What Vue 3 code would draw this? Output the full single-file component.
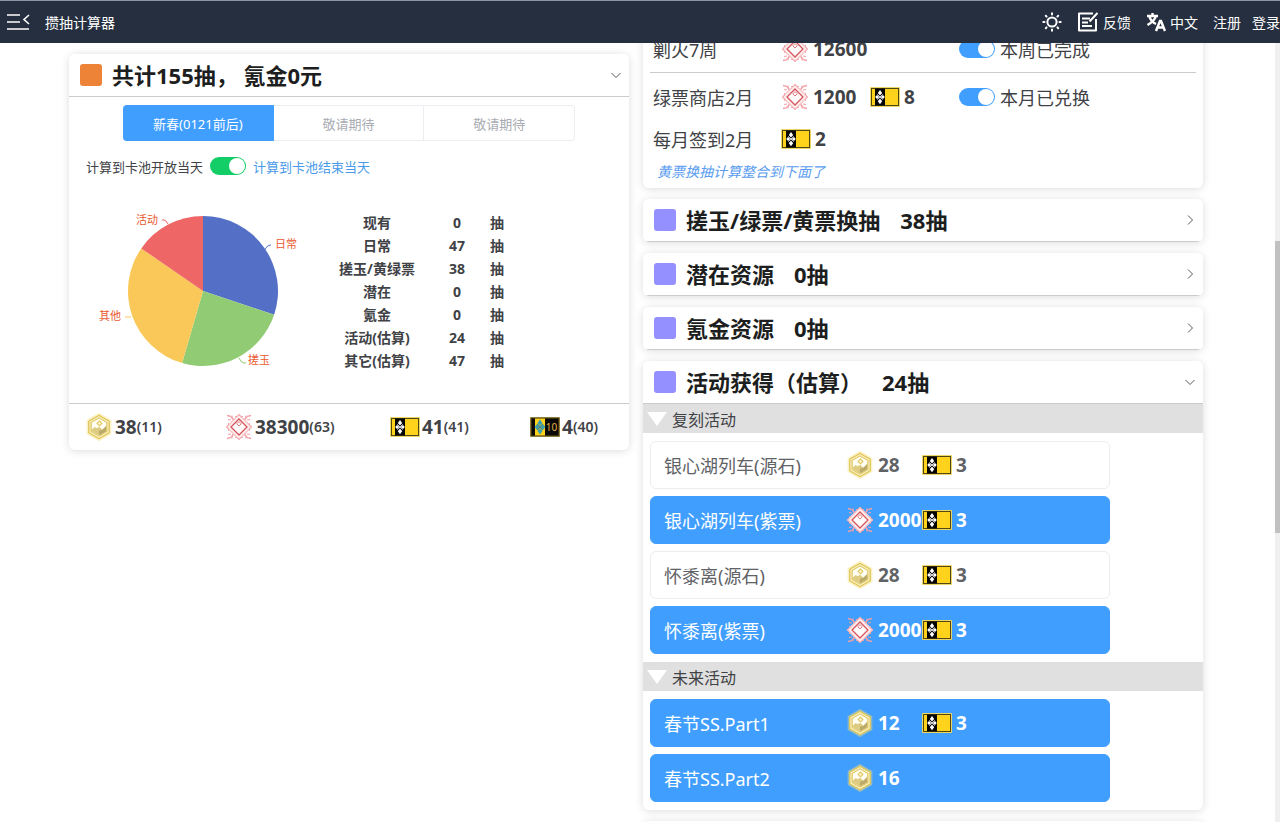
<script setup>
import { ref } from 'vue'

const pools = ['新春(0121前后)', '敬请期待', '敬请期待']
const untilEnd = ref(true)
const weekDone = ref(true)
const monthDone = ref(true)

const summary = [
  ['现有', 0],
  ['日常', 47],
  ['搓玉/黄绿票', 38],
  ['潜在', 0],
  ['氪金', 0],
  ['活动(估算)', 24],
  ['其它(估算)', 47]
]

const totals = [
  { icon: 'stone', value: 38, sub: 11 },
  { icon: 'jade', value: 38300, sub: 63 },
  { icon: 'ticket', value: 41, sub: 41 },
  { icon: 'ticket10', value: 4, sub: 40 }
]

const collapsed = [
  { name: '搓玉/绿票/黄票换抽', count: '38抽' },
  { name: '潜在资源', count: '0抽' },
  { name: '氪金资源', count: '0抽' }
]

const groups = ref([
  {
    name: '复刻活动',
    options: [
      { name: '银心湖列车(源石)', on: false, items: [['stone', 28], ['ticket', 3]] },
      { name: '银心湖列车(紫票)', on: true, items: [['jade', 2000], ['ticket', 3]] },
      { name: '怀黍离(源石)', on: false, items: [['stone', 28], ['ticket', 3]] },
      { name: '怀黍离(紫票)', on: true, items: [['jade', 2000], ['ticket', 3]] }
    ]
  },
  {
    name: '未来活动',
    options: [
      { name: '春节SS.Part1', on: true, items: [['stone', 12], ['ticket', 3]] },
      { name: '春节SS.Part2', on: true, items: [['stone', 16]] }
    ]
  }
])

const pie = [
  { name: '日常', value: 47, color: '#5470c6', x: 188, y: 47, line: 'M177 50q3-6 6-6h1' },
  { name: '搓玉', value: 38, color: '#91cc75', x: 161, y: 163, line: 'M152 157q2 5 5 5h2' },
  { name: '其他', value: 47, color: '#fac858', x: 12, y: 119, line: 'M44 116l-3 0h-3' },
  { name: '活动', value: 24, color: '#ee6666', x: 49, y: 23, line: 'M81 23q-2-4-4-4h-2' }
]
const cx = 116
const cy = 90
const radius = 75
const sum = pie.reduce((a, s) => a + s.value, 0)
let acc = 0
const slices = pie.map((s) => {
  const a = (acc / sum) * Math.PI * 2
  acc += s.value
  const b = (acc / sum) * Math.PI * 2
  const p = (t) => `${(cx + radius * Math.sin(t)).toFixed(2)} ${(cy - radius * Math.cos(t)).toFixed(2)}`
  return { ...s, d: `M${cx} ${cy}L${p(a)}A${radius} ${radius} 0 0 1 ${p(b)}Z` }
})
</script>

<template>
  <div class="page">
    <svg class="defs" aria-hidden="true">
      <symbol id="stone" viewBox="0 0 28 28">
        <path d="M14 1.6l10.8 6.2v12.4L14 26.4 3.2 20.2V7.8z" fill="#f7e07e" stroke="#f5dc70" stroke-opacity=".4" stroke-width="3.2" stroke-linejoin="round" />
        <path d="M14 2.4l10.2 5.800v11.600L14 25.600 3.800 19.800V8.200z" fill="#dfc661" stroke="#d8bd52" stroke-width=".8" />
        <path d="M14 3.800l9 5.100v10.200l-9 5.100-9-5.100V8.900z" fill="none" stroke="#f8efbd" stroke-width="1.200" />
        <path d="M14 5.6l7.2 4.2v8.4L14 22.400l-7.200-4.200V9.800z" fill="#fffef4" />
        <path d="M6.800 16.500l3-2.600 1.800 1.400 2.600-1.600 3.200 3 3.800-3.700v5.200L14 22.400l-7.200-4.200z" fill="#dccb80" />
        <path d="M14 22.400v-4.600l3.400-1.100 3.800-3.700v5.200z" fill="#bcab68" />
        <path d="M14.500 8l2.400 2.4-2.400 2.400-2.400-2.4z" fill="#fff7d0" stroke="#dfc55d" stroke-width="1.1" />
      </symbol>
      <symbol id="jade" viewBox="0 0 28 28">
        <g fill="none" stroke="#f1a0a5">
          <path d="M14 1.500L26.500 14 14 26.500 1.500 14z" stroke="#f7c3c5" stroke-width="1.200" fill="#fdebeb" />
          <path d="M2 2.500l3.500.8 3 3.200M26 2.500l-3.500.8-3 3.200M2 25.500l3.500-.8 3-3.200M26 25.500l-3.500-.8-3-3.200" stroke-width="1.300" />
          <path d="M3 6.500l3 .5M7 2.500l.5 4M25 6.500l-3 .5M21 2.500l-.5 4M3 21.500l3-.5M7 25.500l.5-4M25 21.500l-3-.5M21 25.500l-.5-4" stroke-width="1" />
          <path d="M10 3.500h2l2-2 2 2h2M10 24.500h2l2 2 2-2h2M3.500 10v2l-2 2 2 2v2M24.500 10v2l2 2-2 2v2" stroke-width=".9" />
        </g>
        <path d="M14 4.200L23.800 14 14 23.800 4.200 14z" fill="#fff3f3" />
        <path d="M14 6l8 8-8 8-8-8z" fill="#fffafa" stroke="#d4545b" stroke-width="1.300" />
        <path d="M14 8.600l2.200 2.200L14 13l-2.200-2.200z" fill="#fff" stroke="#de777b" stroke-width="1" />
      </symbol>
      <symbol id="ticket" viewBox="0 0 30 20">
        <rect x="0" y="0" width="30" height="20" rx="1" fill="#ead565" />
        <rect x="1.5" y="1.5" width="27" height="17" fill="#ffd21c" stroke="#514715" stroke-width="1" />
        <rect x="5" y="1.5" width="10" height="17" fill="#050505" />
        <path d="M10 3l2.200 3L10 8.400 7.800 6zM10 11.600l2.200 2.600-2.200 3-2.200-3zM5.200 10L7 8l2.200 2L7 12zM14.800 10L13 8l-2.200 2 2.200 2z" fill="#fff" />
        <path d="M7.200 7.400l5.600 5.200M12.800 7.400l-5.600 5.200" stroke="#d7d9dc" stroke-width="1" />
      </symbol>
    </svg>

    <header class="bar">
      <button class="plain menu" aria-label="菜单">
        <svg width="24" height="18" viewBox="0 0 24 18" fill="none" stroke="#fff" stroke-width="1.6">
          <path d="M1 2h13M1 9h13M1 16h22M23 2l-5 4.500 5 4.500" />
        </svg>
      </button>
      <h1>攒抽计算器</h1>
      <nav>
        <button class="plain sun" aria-label="切换主题">
          <svg width="20" height="20" viewBox="0 0 20 20" fill="none" stroke="#fff" stroke-width="2" stroke-linecap="round">
            <circle cx="10" cy="10" r="4.600" />
            <path d="M10 1.300v1.200M10 17.500v1.200M1.300 10h1.200M17.500 10h1.200M3.800 3.800l.8.8M15.400 15.400l.8.8M3.800 16.200l.8-.8M15.400 4.600l.8-.8" />
          </svg>
        </button>
        <a href="#" class="feedback">
          <svg width="22" height="20" viewBox="0 0 22 20" fill="none" stroke="#fff" stroke-width="2">
            <path d="M16 1.500H2v17h17V7M5 6.500h8M5 10.500h6M5 14h10M12.500 9.500L20.500 1" stroke-linejoin="round" />
          </svg>
          反馈
        </a>
        <a href="#" class="lang">
          <svg width="20" height="20" viewBox="0 0 20 20" fill="none" stroke="#fff">
            <path d="M1 4h11M6.500 1v3M10 4q-1.500 5-8.500 9M3.500 5q2 5 6.500 7" stroke-width="2.400" />
            <path d="M10 19l4-10h1l4 10M11.500 15.500h6" stroke-width="2.500" />
          </svg>
          中文
        </a>
        <a href="#" class="reg">注册</a>
        <a href="#">登录</a>
      </nav>
    </header>

    <main>
      <div class="columns">
        <div class="col">
          <section class="card">
            <button class="head line">
              <i class="mark orange"></i>
              <span>共计155抽，&nbsp;氪金0元</span>
              <svg class="arrow" width="10" height="10" viewBox="0 0 10 10"><path d="M.5 3L5 7.500 9.500 3" /></svg>
            </button>
            <div class="segments">
              <button v-for="(p, i) in pools" :key="i" :class="{ active: i === 0 }" :disabled="i > 0">{{ p }}</button>
            </div>
            <div class="range">
              <label for="until">计算到卡池开放当天</label>
              <input id="until" v-model="untilEnd" type="checkbox" class="switch green" />
              <label for="until" class="blue">计算到卡池结束当天</label>
            </div>
            <div class="chart">
              <svg width="220" height="180" viewBox="0 0 220 180" role="img" aria-label="抽数分布">
                <g v-for="s in slices" :key="s.name">
                  <path :d="s.d" :fill="s.color" />
                  <path :d="s.line" fill="none" :stroke="s.color" />
                  <text :x="s.x" :y="s.y" font-size="11" fill="#ea5a30">{{ s.name }}</text>
                </g>
              </svg>
              <table>
                <tbody>
                  <tr v-for="r in summary" :key="r[0]">
                    <th scope="row">{{ r[0] }}</th>
                    <td>{{ r[1] }}</td>
                    <td>抽</td>
                  </tr>
                </tbody>
              </table>
            </div>
            <div class="totals">
              <div v-for="t in totals" :key="t.icon">
                <svg v-if="t.icon === 'ticket10'" class="ticket" viewBox="0 0 30 20">
                  <rect width="30" height="20" rx="1" fill="#8b7a3a" />
                  <rect x="1.5" y="1.5" width="27" height="17" fill="#0b0906" stroke="#3a3112" />
                  <rect x="5" y="1.5" width="10" height="17" fill="#ffd21c" />
                  <path d="M10 2.500l2.500 3.600L10 8.700 7.500 6.100zM10 11.300l2.500 2.600-2.500 3.600-2.500-3.600zM4.500 10l2.400-2.400L9.300 10l-2.400 2.400zM15.500 10l-2.400-2.400-2.400 2.400 2.400 2.400z" fill="#3aa0b4" />
                  <path d="M7 6.800l6 6.400M13 6.800l-6 6.400" stroke="#3a8696" stroke-width="1.200" />
                  <text x="21.500" y="13.500" text-anchor="middle" font-size="10" fill="#e3b04a">10</text>
                </svg>
                <svg v-else :class="t.icon" aria-hidden="true"><use :href="'#' + t.icon" /></svg>
                <b>{{ t.value }}</b><small>({{ t.sub }})</small>
              </div>
            </div>
          </section>
        </div>

        <div class="col scrolled">
          <section class="card daily">
            <div class="row line">
              <span>剿火7周</span>
              <div class="items">
                <span class="item"><svg class="jade" aria-hidden="true"><use href="#jade" /></svg><b>12600</b></span>
              </div>
              <label><input v-model="weekDone" type="checkbox" class="switch" />本周已完成</label>
            </div>
            <div class="row">
              <span>绿票商店2月</span>
              <div class="items">
                <span class="item"><svg class="jade" aria-hidden="true"><use href="#jade" /></svg><b>1200</b></span>
                <span class="item"><svg class="ticket" aria-hidden="true"><use href="#ticket" /></svg><b>8</b></span>
              </div>
              <label><input v-model="monthDone" type="checkbox" class="switch" />本月已兑换</label>
            </div>
            <div class="row short">
              <span>每月签到2月</span>
              <div class="items">
                <span class="item"><svg class="ticket" aria-hidden="true"><use href="#ticket" /></svg><b>2</b></span>
              </div>
            </div>
            <p class="hint">黄票换抽计算整合到下面了</p>
          </section>

          <section v-for="c in collapsed" :key="c.name" class="card">
            <button class="head line">
              <i class="mark"></i>
              <span>{{ c.name }}</span><span class="count">{{ c.count }}</span>
              <svg class="arrow" width="10" height="10" viewBox="0 0 10 10"><path d="M3 .5L7.500 5 3 9.500" /></svg>
            </button>
          </section>

          <section class="card">
            <button class="head line">
              <i class="mark"></i>
              <span>活动获得（估算）</span><span class="count">24抽</span>
              <svg class="arrow" width="10" height="10" viewBox="0 0 10 10"><path d="M.5 3L5 7.500 9.500 3" /></svg>
            </button>
            <template v-for="g in groups" :key="g.name">
              <h2 class="sub"><i></i>{{ g.name }}</h2>
              <div class="options">
                <button v-for="o in g.options" :key="o.name" :class="{ on: o.on }" :aria-pressed="o.on" @click="o.on = !o.on">
                  <span>{{ o.name }}</span>
                  <span v-for="it in o.items" :key="it[0]" class="item">
                    <svg :class="it[0]" aria-hidden="true"><use :href="'#' + it[0]" /></svg><b>{{ it[1] }}</b>
                  </span>
                </button>
              </div>
            </template>
          </section>

          <section class="card">
            <button class="head line" aria-label="更多"></button>
          </section>
        </div>
      </div>
      <div class="track"><div class="thumb"></div></div>
    </main>
  </div>
</template>

<style>
body {
  background: #fff;
  overflow: hidden;
}
</style>

<style scoped>
.page {
  height: 100vh;
  display: flex;
  flex-direction: column;
  font-family: "Noto Sans", "Noto Sans CJK SC", sans-serif;
  color: #404246;
}
.page * {
  box-sizing: border-box;
}
.defs {
  position: absolute;
  width: 0;
  height: 0;
}
button {
  font: inherit;
  color: inherit;
  cursor: pointer;
}
.plain {
  border: 0;
  padding: 0;
  background: none;
  display: flex;
}
.bar {
  flex: none;
  height: 43px;
  display: flex;
  align-items: center;
  background: #252f3f;
  border-top: 1px solid #8a96a4;
  color: #fff;
  font-size: 14px;
  padding-left: 6px;
  z-index: 1;
}
.bar h1 {
  font-size: 14px;
  font-weight: 400;
  margin: 0 0 0 15px;
}
nav {
  margin-left: auto;
  display: flex;
  align-items: center;
  white-space: nowrap;
}
nav a {
  color: inherit;
  text-decoration: none;
  display: flex;
  align-items: center;
  gap: 4px;
}
.sun {
  margin-right: 15px;
}
.feedback,
.lang {
  margin-right: 15px;
}
.reg {
  margin-right: 11px;
}
main {
  flex: 1;
  min-height: 0;
  display: flex;
  overflow: hidden;
}
.columns {
  flex: 1;
  max-width: 1134px;
  margin: 0 auto;
  display: grid;
  grid-template-columns: 1fr 1fr;
  gap: 14px;
  align-items: start;
  padding-top: 11px;
}
.col {
  display: flex;
  flex-direction: column;
  gap: 11px;
}
.scrolled {
  margin-top: -28px;
}
.track {
  width: 5px;
  margin-left: 3px;
  background: #f0f0f0;
  display: grid;
  grid-template-rows: 198fr 292fr 289fr;
}
.thumb {
  grid-row: 2;
  background: #c1c1c1;
}
.card {
  background: #fff;
  border-radius: 6px;
  box-shadow: 0 1px 8px rgba(0, 0, 0, 0.14);
  overflow: hidden;
}
.head {
  width: 100%;
  height: 43px;
  display: flex;
  align-items: center;
  padding: 0 8px 0 11px;
  border: 0;
  background: #fff;
  color: #1d1e20;
  font-size: 22px;
  line-height: 30px;
  font-weight: 700;
  text-align: left;
}
.line {
  border-bottom: 1px solid #cbcbcb;
}
.mark {
  width: 22px;
  height: 22px;
  border-radius: 3px;
  background: #9590ff;
  margin-right: 10px;
}
.orange {
  background: #ed8336;
}
.count {
  margin-left: 20px;
}
.arrow {
  margin-left: auto;
  fill: none;
  stroke: #55585c;
}
.segments {
  display: flex;
  margin: 8px 54px 0;
  height: 36px;
  font-size: 13px;
}
.segments button {
  flex: 1;
  padding: 0;
  background: #fff;
  border: 1px solid #ebedf1;
  border-left-width: 0;
  color: #a9acb3;
}
.segments button:first-child {
  border-radius: 4px 0 0 4px;
}
.segments button:last-child {
  border-radius: 0 4px 4px 0;
}
.segments .active {
  background: #409eff;
  border-color: #409eff;
  color: #fff;
}
.range {
  display: flex;
  align-items: center;
  gap: 7px;
  height: 18px;
  margin: 16px 17px 0;
  font-size: 13px;
}
.blue {
  color: #4a9ae8;
}
.switch {
  appearance: none;
  flex: none;
  width: 36px;
  height: 18px;
  margin: 0;
  padding: 1px;
  border-radius: 9px;
  background: #c6c9cf;
  display: flex;
}
.switch::before {
  content: "";
  width: 16px;
  height: 16px;
  border-radius: 50%;
  background: #fff;
}
.switch:checked {
  background: #409eff;
  justify-content: flex-end;
}
.green:checked {
  background: #13ce66;
}
.chart {
  display: flex;
  align-items: center;
  gap: 10px;
  margin: 26px 18px 22px;
}
table {
  border-collapse: collapse;
  font-size: 14px;
  line-height: 23px;
  font-weight: 700;
  text-align: center;
}
th {
  width: 120px;
  padding: 0;
}
td {
  width: 40px;
  padding: 0;
}
.totals {
  display: grid;
  grid-template-columns: 140fr 165fr 140fr 99fr;
  align-items: center;
  height: 47px;
  padding-left: 16px;
  border-top: 1px solid #cbcbcb;
}
.totals div {
  display: flex;
  align-items: center;
  line-height: 26px;
}
.totals svg {
  margin-right: 2px;
}
b {
  font-size: 19px;
  line-height: 26px;
}
small {
  font-size: 14px;
  font-weight: 600;
}
.stone,
.jade {
  flex: none;
  width: 28px;
  height: 28px;
}
.ticket {
  flex: none;
  width: 30px;
  height: 20px;
}
.daily {
  padding: 0 7px;
}
.row {
  display: grid;
  grid-template-columns: 128px 178px 1fr;
  align-items: center;
  height: 47px;
  padding-left: 3px;
  font-size: 18px;
}
.short {
  height: 38px;
}
.row label {
  display: flex;
  align-items: center;
  gap: 5px;
}
.items {
  display: flex;
}
.item {
  display: flex;
  align-items: center;
  gap: 4px;
}
.items .item {
  width: 90px;
}
.hint {
  margin: 0;
  padding: 2px 7px 4px;
  font-size: 14px;
  line-height: 24px;
  font-style: italic;
  color: #5a9cf0;
}
.sub {
  display: flex;
  align-items: center;
  gap: 5px;
  height: 29px;
  margin: 0;
  padding-left: 4px;
  background: #e0e0e0;
  font-size: 16px;
  font-weight: 400;
}
.sub i {
  border: 10px solid transparent;
  border-top: 14px solid #fff;
  border-bottom: 0;
}
.options {
  display: flex;
  flex-direction: column;
  gap: 7px;
  padding: 8px 7px;
}
.options button {
  display: grid;
  grid-template-columns: 182px 76px auto;
  align-items: center;
  justify-content: start;
  max-width: 460px;
  height: 48px;
  padding: 0 13px;
  border: 1px solid #ebedf0;
  border-radius: 6px;
  background: #fff;
  color: #606266;
  font-size: 18px;
  text-align: left;
}
.options .on {
  background: #409eff;
  border-color: #409eff;
  color: #fff;
}
</style>
